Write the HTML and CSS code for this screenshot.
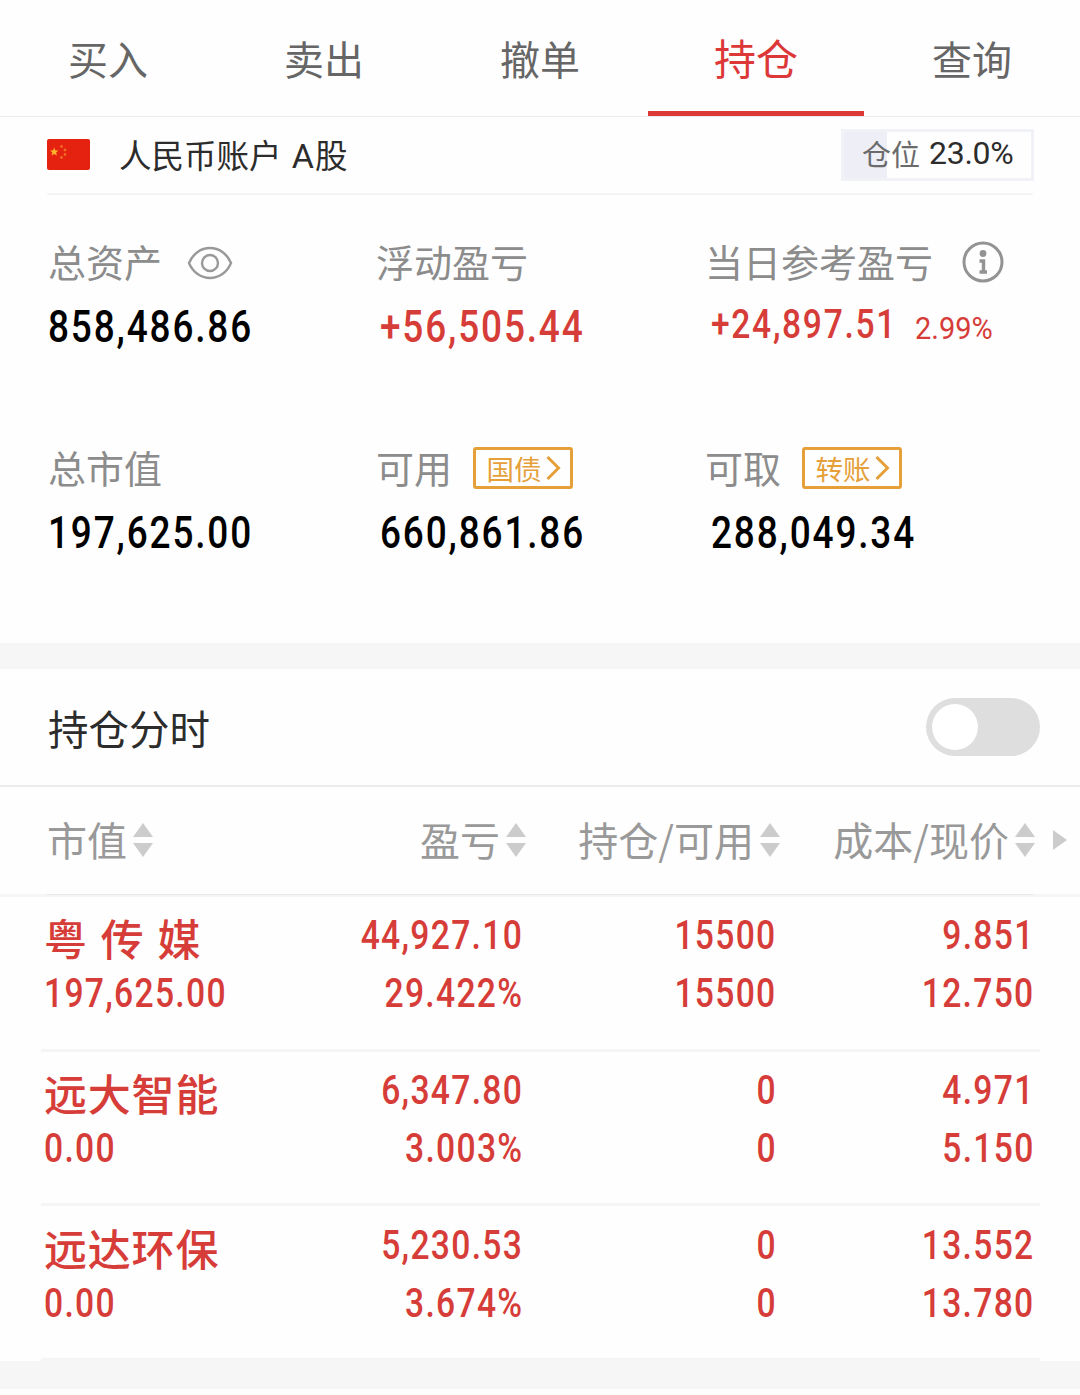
FILE: index.html
```html
<!DOCTYPE html>
<html lang="zh-CN">
  <head>
    <meta charset="UTF-8" />
    <meta name="viewport" content="width=device-width, initial-scale=1.0" />
    <title>持仓</title>
    <link rel="stylesheet" href="styles.css">
  </head>
  <body>
    <nav class="tabs">
      <a class="tab">买入</a>
      <a class="tab">卖出</a>
      <a class="tab">撤单</a>
      <a class="tab active">持仓</a>
      <a class="tab">查询</a>
    </nav>

    <section class="account">
      <svg class="flag" width="43" height="31" viewBox="0 0 43 31">
        <rect width="43" height="31" rx="2" fill="#e5220f" />
        <path fill="#fdb32b" d="M7.2 8.6l1.2 2.8 3 .2-2.3 2 .8 3-2.7-1.6-2.6 1.6.7-3-2.3-2 3-.2z" />
        <g fill="#ee6a25">
          <circle cx="14.5" cy="7.5" r="1.4" />
          <circle cx="18" cy="11" r="1.4" />
          <circle cx="18" cy="15.5" r="1.4" />
          <circle cx="14.5" cy="18.5" r="1.4" />
        </g>
      </svg>
      <span class="account-name">人民币账户 <span class="market-letter">A</span>股</span>
      <div class="position">
        <div class="position-fill" style="width: 23%"></div>
        <span class="position-text">仓位<b>23.0%</b></span>
      </div>
    </section>

    <section class="stats">
      <div class="stat">
        <div class="label">
          总资产
          <svg class="eye" width="46" height="36" viewBox="0 0 46 36" fill="none" stroke="#999" stroke-width="2.4">
            <path d="M2 18C6 8.5 14 3 23 3s17 5.5 21 15c-4 9.5-12 15-21 15S6 27.500 2 18z" />
            <circle cx="23" cy="18" r="8" />
          </svg>
        </div>
        <div class="value"><span class="num">858,486.86</span></div>
      </div>
      <div class="stat">
        <div class="label">浮动盈亏</div>
        <div class="value red"><span class="num">+56,505.44</span></div>
      </div>
      <div class="stat">
        <div class="label">
          当日参考盈亏
          <svg class="info" width="42" height="42" viewBox="0 0 42 42" fill="none" stroke="#939393">
            <circle cx="21" cy="21" r="19" stroke-width="3" />
            <circle cx="21" cy="12.5" r="3.4" fill="#939393" stroke="none" />
            <path d="M17.5 20h4v12M17.5 31h7.5" stroke-width="3.4" />
          </svg>
        </div>
        <div class="value small red">
          <span class="num">+24,897.51</span>
          <span class="percent">2.99%</span>
        </div>
      </div>
      <div class="stat">
        <div class="label">总市值</div>
        <div class="value"><span class="num">197,625.00</span></div>
      </div>
      <div class="stat">
        <div class="label">
          可用
          <span class="tag">国债<svg width="15" height="26" viewBox="0 0 15 26" fill="none" stroke="#e5a03a" stroke-width="3"><path d="M1.5 2l11 11-11 11" /></svg></span>
        </div>
        <div class="value"><span class="num">660,861.86</span></div>
      </div>
      <div class="stat">
        <div class="label">
          可取
          <span class="tag">转账<svg width="15" height="26" viewBox="0 0 15 26" fill="none" stroke="#e5a03a" stroke-width="3"><path d="M1.5 2l11 11-11 11" /></svg></span>
        </div>
        <div class="value"><span class="num">288,049.34</span></div>
      </div>
    </section>

    <section class="chart-switch">
      <span>持仓分时</span>
      <div class="switch"><div class="knob"></div></div>
    </section>

    <div class="table-head">
      <div class="th">市值<i class="sort"></i></div>
      <div class="th">盈亏<i class="sort"></i></div>
      <div class="th">持仓/可用<i class="sort"></i></div>
      <div class="th">成本/现价<i class="sort"></i></div>
      <i class="more"></i>
    </div>

    <div class="table">
      <div class="row">
        <div class="cell first"><b class="name">粤 传 媒</b><span class="num">197,625.00</span></div>
        <div class="cell"><span class="num">44,927.10</span><span class="num">29.422%</span></div>
        <div class="cell"><span class="num">15500</span><span class="num">15500</span></div>
        <div class="cell"><span class="num">9.851</span><span class="num">12.750</span></div>
      </div>
      <div class="row">
        <div class="cell first"><b class="name">远大智能</b><span class="num">0.00</span></div>
        <div class="cell"><span class="num">6,347.80</span><span class="num">3.003%</span></div>
        <div class="cell"><span class="num">0</span><span class="num">0</span></div>
        <div class="cell"><span class="num">4.971</span><span class="num">5.150</span></div>
      </div>
      <div class="row">
        <div class="cell first"><b class="name">远达环保</b><span class="num">0.00</span></div>
        <div class="cell"><span class="num">5,230.53</span><span class="num">3.674%</span></div>
        <div class="cell"><span class="num">0</span><span class="num">0</span></div>
        <div class="cell"><span class="num">13.552</span><span class="num">13.780</span></div>
      </div>
    </div>
    <div class="bottom-gap"></div>
  </body>
</html>
```
FILE: styles.css
```css
* {
  box-sizing: border-box;
}
body {
  margin: 0;
  width: 1080px;
  background: #fefefe;
  color: #2c2c2c;
  font-family: "Noto Sans CJK SC", sans-serif;
}

/* tabs */
.tabs {
  display: flex;
  height: 117px;
  border-bottom: 1px solid #ebebeb;
}
.tab {
  flex: 1;
  height: 116px;
  line-height: 116px;
  text-align: center;
  font-size: 40px;
  color: #666;
}
.tab.active {
  font-size: 42px;
  line-height: 113px;
  color: #dc3838;
  border-bottom: 5px solid #dc3838;
}

/* account line */
.account {
  display: flex;
  align-items: center;
  height: 78px;
  margin: 0 47px;
  border-bottom: 2px solid #f5f5f5;
}
.flag {
  margin-top: -2px;
}
.account-name {
  margin-left: 29px;
  font-size: 32.5px;
  line-height: 74px;
}
.market-letter {
  margin: 0 1px 0 3px;
  font-family: Roboto, sans-serif;
  font-size: 34px;
}
.position {
  position: relative;
  width: 193px;
  height: 52px;
  margin: 0 -1px 0 auto;
  border: 3px solid #f1f1f8;
}
.position-fill {
  height: 100%;
  background: #eeeef7;
}
.position-text {
  position: absolute;
  top: 0;
  left: 18px;
  display: flex;
  font-size: 29px;
  line-height: 43px;
  color: #6b6b6b;
  white-space: nowrap;
}
.position-text b {
  margin-left: 9px;
  font-family: Roboto, sans-serif;
  font-size: 32px;
  font-weight: 400;
  letter-spacing: -0.3px;
  color: #2c2c2c;
}

/* stats */
.stats {
  display: grid;
  grid-template-columns: 328px 329px 1fr;
  grid-template-rows: 206px 206px;
  height: 474px;
  padding: 36px 0 0 48px;
  border-bottom: 26px solid #f6f6f6;
}
.label {
  display: flex;
  align-items: center;
  height: 60px;
  font-size: 38px;
  line-height: 60px;
  color: #8c8c8c;
}
.eye {
  margin: 4px 0 0 25px;
}
.info {
  margin: 2px 0 0 29px;
}
.tag {
  display: flex;
  align-items: center;
  width: 100px;
  height: 42px;
  margin: 1px 0 0 20.5px;
  padding-left: 11px;
  border: 3px solid #e5a03a;
  border-radius: 3px;
  font-size: 27.5px;
  line-height: 34px;
  color: #e5a03a;
}
.tag svg {
  margin-left: 4px;
}
/* the digits are set condensed, with looser tracking */
.num {
  display: inline-block;
  font-family: Roboto, sans-serif;
  font-weight: 500;
  letter-spacing: 2.2px;
  transform: scaleX(0.84);
  transform-origin: left;
}
.percent {
  padding-top: 4px;
  font-family: Roboto, sans-serif;
  font-size: 30.5px;
  font-weight: 400;
  transform: scaleX(0.95);
  transform-origin: left;
}
.value {
  height: 66px;
  font-size: 44px;
  line-height: 64px;
  color: #000;
}
.stat:not(:nth-child(3n + 1)) .value {
  padding-left: 4px;
}
.stat:nth-child(3n) .value {
  padding-left: 6px;
}
.value.red {
  color: #d63c38;
}
.value.small {
  display: flex;
  padding-top: 2px;
  font-size: 40px;
}
.value.small .num {
  width: 204px;
  letter-spacing: 2px;
}

/* intraday switch */
.chart-switch {
  display: flex;
  justify-content: space-between;
  align-items: center;
  height: 118px;
  padding: 0 40px 0 48px;
  border-bottom: 2px solid #ededed;
  font-size: 40.5px;
}
.switch {
  width: 114px;
  height: 58px;
  padding: 6px;
  border-radius: 29px;
  background: #dedede;
}
.knob {
  width: 46px;
  height: 46px;
  border-radius: 50%;
  background: #fff;
}

/* holdings */
.table-head,
.row {
  display: grid;
  grid-template-columns: 226px 252px 254px 255px 1fr;
}
.table-head {
  height: 110px;
  padding: 0 0 7px 48px;
  align-items: center;
  font-size: 40px;
  color: #999;
  background:
    linear-gradient(#e8e8e8, #e8e8e8) 47px 107px / 986px 1px no-repeat,
    linear-gradient(#f6f6f6, #f6f6f6) left bottom / 100% 3px no-repeat;
}
.th {
  display: flex;
  align-items: center;
  justify-content: flex-end;
}
.th:first-child {
  justify-content: flex-start;
  margin-left: -1px;
}
.sort {
  display: grid;
  gap: 6px;
  margin: 2px 0 0 6px;
}
.sort::before,
.sort::after {
  content: "";
  border: 10px solid transparent;
  border-top: 0;
  border-bottom: 14px solid #ccc;
}
.sort::after {
  border-bottom: 0;
  border-top: 14px solid #ccc;
}
.more {
  width: 0;
  margin: 2px 0 0 18px;
  border: 10px solid transparent;
  border-left: 14px solid #ccc;
  border-right: 0;
}
.row {
  grid-template-columns: 229px 253.5px 253px 258px;
  height: 154.67px;
  margin: 0 38px 0 41px;
  padding-top: 9.4px;
  font-size: 41px;
  line-height: 58px;
  color: #d63c38;
  background: linear-gradient(#f7f4f5, #f7f4f5) left bottom / 999px 3px no-repeat;
}
.cell {
  display: flex;
  flex-direction: column;
  align-items: flex-end;
}
.cell .num {
  height: 58px;
  letter-spacing: 1.6px;
  transform: scaleX(0.82);
  transform-origin: right;
}
.cell.first {
  align-items: flex-start;
  padding-left: 3px;
}
.cell.first .num {
  transform-origin: left;
}
.name {
  height: 58px;
  font-size: 43px;
  font-weight: 500;
  line-height: 62px;
  letter-spacing: 0.8px;
  word-spacing: 2.5px;
}
.bottom-gap {
  height: 28px;
  background: #f6f6f6;
}
```
